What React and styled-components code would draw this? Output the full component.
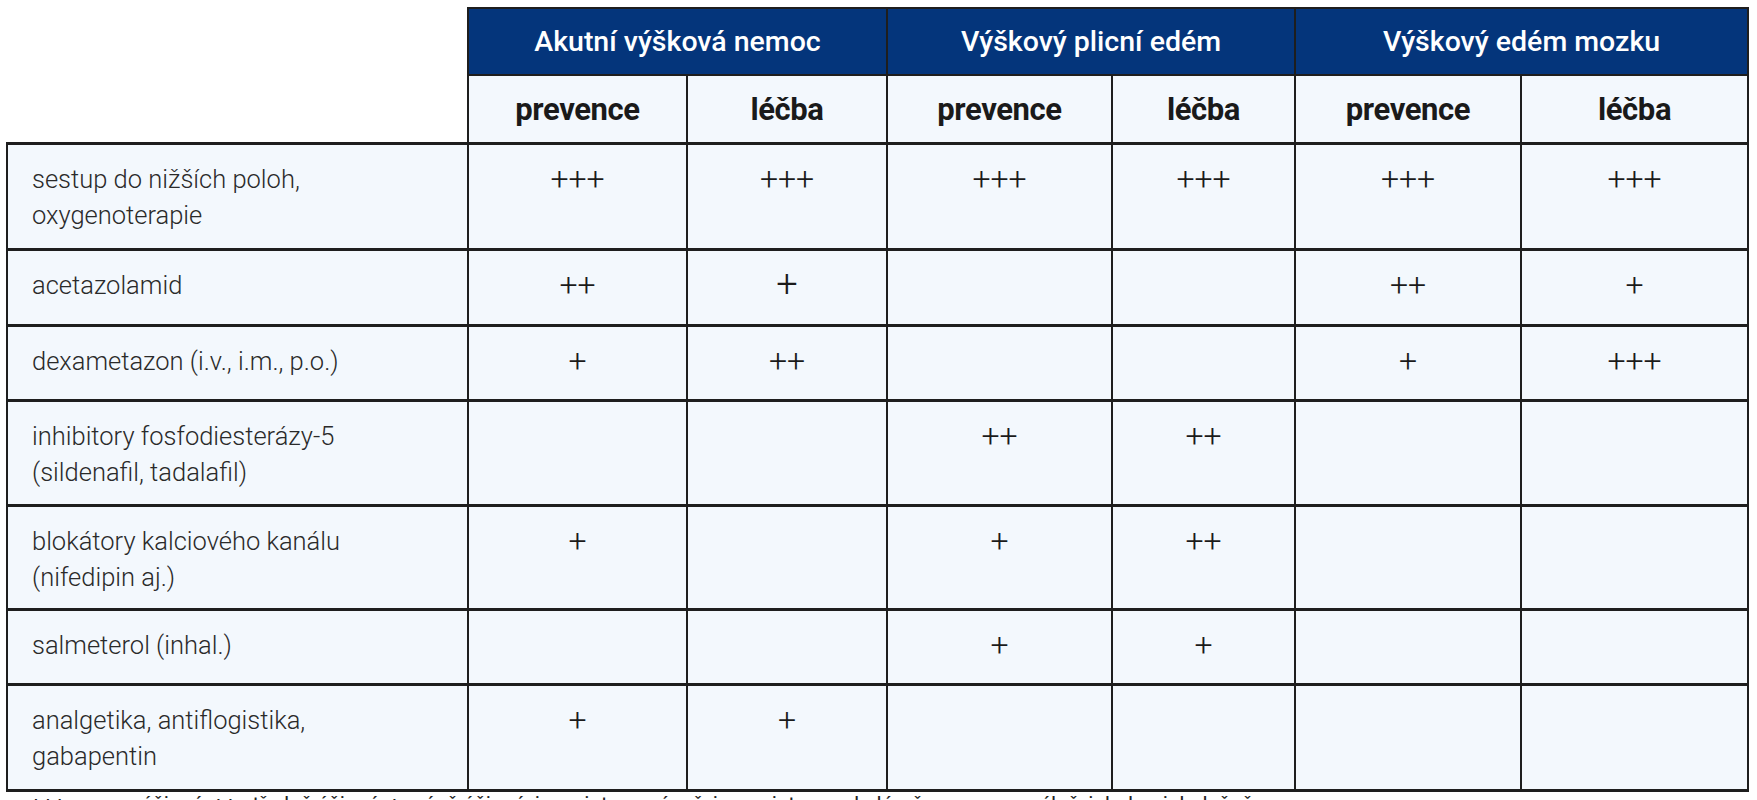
import React from 'react';
import styled, { createGlobalStyle } from 'styled-components';

const GlobalStyle = createGlobalStyle`
  html, body {
    margin: 0;
    background: #fff;
  }
  body {
    font-family: Roboto, "Liberation Sans", sans-serif;
    color: #1f1f1f;
  }
`;

const Page = styled.div`
  padding: 7px 10px 0 6px;
  height: 800px;
  overflow: hidden;
  box-sizing: border-box;
`;

const Table = styled.table`
  border-collapse: collapse;
  table-layout: fixed;
  width: 1741px;
`;

const Corner = styled.th`
  border: none;
  background: #fff;
`;

const GroupHead = styled.th`
  height: 65px;
  padding: 0;
  background: #04357b;
  color: #fff;
  border: 2px solid #1e1e1e;
  font-weight: 500;
  font-size: 28.5px;
  text-align: center;
  vertical-align: middle;
`;

const SubHead = styled.th`
  height: 66px;
  padding: 0;
  background: #f3f8fd;
  border: 2px solid #1e1e1e;
  text-align: center;
  vertical-align: middle;
`;

const SubLabel = styled.span`
  display: inline-block;
  font-weight: 700;
  font-size: 31px;
  letter-spacing: -0.4px;
  color: #1a1a1a;
`;

const Row = styled.tr`
  height: ${(p) => p.$h}px;
`;

const Label = styled.td`
  padding: 16px 10px 0 24px;
  background: #f3f8fd;
  border: 2px solid #1e1e1e;
  border-width: 3px 2px 2px 2px;
  font-weight: 300;
  font-size: 25.5px;
  line-height: 36px;
  vertical-align: top;
  color: #2a2a2a;
`;

const Mark = styled.td`
  padding: ${(p) => (p.$big ? '13px' : '16px')} 0 0;
  background: #f3f8fd;
  border: 2px solid #1e1e1e;
  border-width: 3px 2px 2px 2px;
  text-align: center;
  vertical-align: top;
  font-weight: 300;
  font-size: ${(p) => (p.$big ? '38px' : '32px')};
  line-height: ${(p) => (p.$big ? '40px' : '36px')};
  color: #1a1a1a;
`;

const Tail = styled.tbody`
  tr:last-child td {
    border-bottom-width: 3px;
  }
`;

const Footnote = styled.div`
  margin-top: 4px;
  padding-left: 24px;
  font-weight: 400;
  font-size: 21px;
  line-height: 16px;
  color: #222;
  white-space: nowrap;
`;

const widths = [461, 219, 200, 225, 183, 226, 227];

const groups = ['Akutní výšková nemoc', 'Výškový plicní edém', 'Výškový edém mozku'];

const rows = [
  { h: 106, label: ['sestup do nižších poloh,', 'oxygenoterapie'], marks: ['+++', '+++', '+++', '+++', '+++', '+++'] },
  { h: 76, label: ['acetazolamid'], marks: ['++', 'big+', '', '', '++', '+'] },
  { h: 75, label: ['dexametazon (i.v., i.m., p.o.)'], marks: ['+', '++', '', '', '+', '+++'] },
  { h: 105, label: ['inhibitory fosfodiesterázy-5', '(sildenafil, tadalafil)'], marks: ['', '', '++', '++', '', ''] },
  { h: 104, label: ['blokátory kalciového kanálu', '(nifedipin aj.)'], marks: ['+', '', '+', '++', '', ''] },
  { h: 75, label: ['salmeterol (inhal.)'], marks: ['', '', '+', '+', '', ''] },
  { h: 106, label: ['analgetika, antiflogistika,', 'gabapentin'], marks: ['+', '+', '', '', '', ''] },
];

export default function App() {
  return (
    <Page>
      <GlobalStyle />
      <Table>
        <colgroup>
          {widths.map((w, i) => (
            <col key={i} style={{ width: w }} />
          ))}
        </colgroup>
        <thead>
          <tr>
            <Corner rowSpan={2} />
            {groups.map((g) => (
              <GroupHead key={g} colSpan={2}>
                {g}
              </GroupHead>
            ))}
          </tr>
          <tr>
            {groups.map((g) => (
              <React.Fragment key={g}>
                <SubHead>
                  <SubLabel>prevence</SubLabel>
                </SubHead>
                <SubHead>
                  <SubLabel>léčba</SubLabel>
                </SubHead>
              </React.Fragment>
            ))}
          </tr>
        </thead>
        <Tail>
          {rows.map((r) => (
            <Row key={r.label[0]} $h={r.h}>
              <Label>
                {r.label.map((line) => (
                  <div key={line}>{line}</div>
                ))}
              </Label>
              {r.marks.map((m, i) =>
                m === 'big+' ? (
                  <Mark key={i} $big>
                    +
                  </Mark>
                ) : (
                  <Mark key={i}>{m}</Mark>
                )
              )}
            </Row>
          ))}
        </Tail>
      </Table>
      <Footnote>
        +++ vysoce účinné, ++ středně účinné, + méně účinné; i.v. – intravenózně, i.m. – intramuskulárně, p.o. – perorálně, inhal. – inhalačně
      </Footnote>
    </Page>
  );
}
